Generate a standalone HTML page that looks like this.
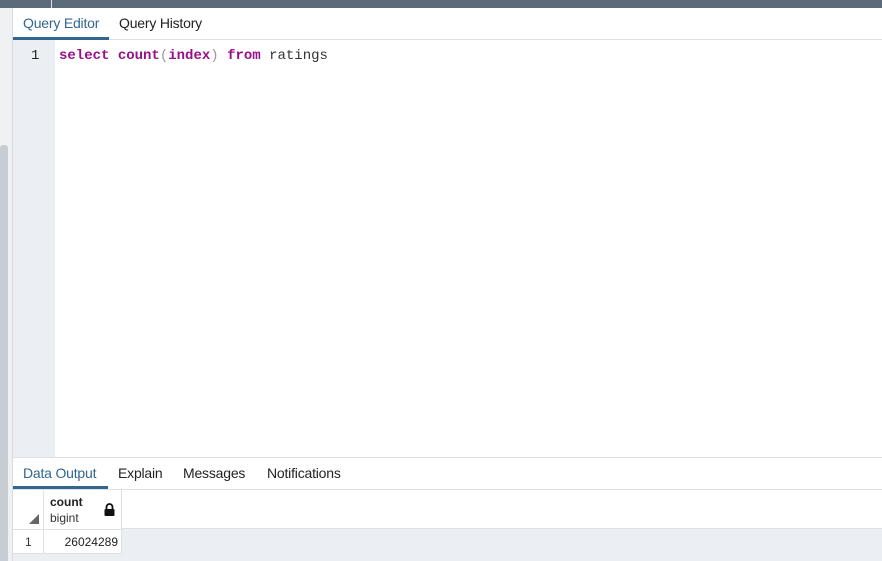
<!DOCTYPE html>
<html><head><style>
body{margin:0;width:882px;height:561px;overflow:hidden;position:relative;background:#fff;font-family:"Liberation Sans",sans-serif}
div{position:absolute;box-sizing:border-box}
.t{font-size:14px;color:#222;top:0;letter-spacing:-0.2px}
</style></head><body>
<div style="left:0;top:0;width:12px;height:561px;background:#f0f1f3"></div>
<div style="left:0;top:145px;width:8px;height:416px;background:#c8ccd3;border-radius:3px 3px 0 0"></div>
<div style="left:12px;top:0;width:1px;height:561px;background:#d8dce1"></div>
<div style="left:0;top:0;width:882px;height:8px;background:#5b6b79"></div>
<div style="left:51px;top:0;width:1px;height:8px;background:#e0e4e8"></div>
<div style="left:13px;top:8px;width:869px;height:32px;background:#fff;border-bottom:1px solid #dde0e4"></div>
<div style="left:13px;top:37px;width:96px;height:3px;background:#326690"></div>
<div class="t" style="left:23px;top:15px;color:#326690">Query Editor</div>
<div class="t" style="left:119px;top:15px">Query History</div>
<div style="left:13px;top:40px;width:42px;height:417px;background:#ebeef3"></div>
<div style="left:31px;top:48px;font-family:'Liberation Mono',monospace;font-size:14px;color:#222">1</div>
<div style="left:59px;top:48px;font-family:'Liberation Mono',monospace;font-size:14px;color:#333;white-space:pre"><b style="color:#990f88;font-weight:bold">select</b> <b style="color:#990f88">count</b><span style="color:#999">(</span><b style="color:#990f88">index</b><span style="color:#999">)</span> <b style="color:#990f88">from</b> ratings</div>
<div style="left:13px;top:457px;width:869px;height:33px;border-top:1px solid #dde0e4;border-bottom:1px solid #dde0e4;background:#fff"></div>
<div style="left:13px;top:486px;width:95px;height:3px;background:#326690"></div>
<div class="t" style="left:23px;top:465px;color:#326690">Data Output</div>
<div class="t" style="left:118px;top:465px">Explain</div>
<div class="t" style="left:183px;top:465px">Messages</div>
<div class="t" style="left:267px;top:465px">Notifications</div>
<div style="left:13px;top:490px;width:869px;height:71px;background:#ebeef3"></div>
<div style="left:13px;top:490px;width:869px;height:39px;background:#fff;border-bottom:1px solid #dde0e4"></div>
<div style="left:13px;top:490px;width:31px;height:63px;background:#fff;border-right:1px solid #dde0e4"></div>
<div style="left:44px;top:490px;width:78px;height:63px;background:#fff;border-right:1px solid #dde0e4"></div>
<div style="left:13px;top:529px;width:109px;height:1px;background:#dde0e4"></div>
<div style="left:13px;top:553px;width:109px;height:1px;background:#dde0e4"></div>
<div style="left:29px;top:514px;width:0;height:0;border-left:10px solid transparent;border-bottom:10px solid #666"></div>
<div style="left:50px;top:495px;font-size:12px;font-weight:bold;color:#222">count</div>
<div style="left:50px;top:511px;font-size:12px;color:#333">bigint</div>
<svg style="position:absolute;left:104px;top:503px" width="11" height="13" viewBox="0 0 11 13"><path d="M2.5 6V4a3 3 0 0 1 6 0v2" fill="none" stroke="#111" stroke-width="1.8"/><rect x="0.5" y="6" width="10" height="7" rx="1" fill="#111"/></svg>
<div style="left:25px;top:535px;font-size:12px;color:#333">1</div>
<div style="left:50px;top:535px;width:68px;text-align:right;font-size:12px;color:#222">26024289</div>
</body></html>
